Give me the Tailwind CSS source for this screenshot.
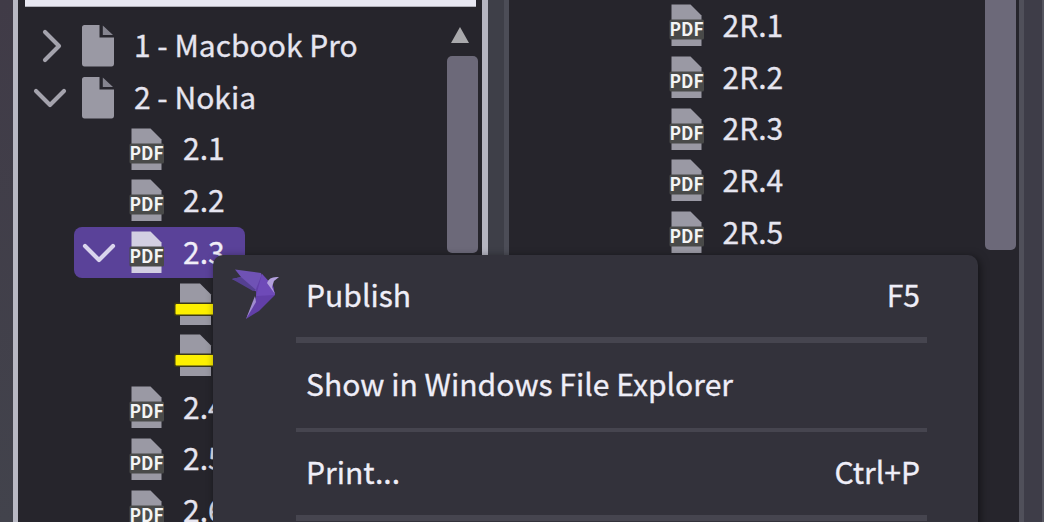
<!DOCTYPE html>
<html lang="en">
<head>
<meta charset="utf-8">
<title>Document tree</title>
<script src="https://cdn.jsdelivr.net/npm/@tailwindcss/browser@4"></script>
</head>
<body class="w-[1044px] h-[522px] overflow-hidden bg-[#26252c] font-['Noto_Sans_CJK_SC','Noto_Sans',sans-serif] text-[30px] text-[#e6e5f0] [-webkit-text-stroke:0.3px_currentColor]">
<svg class="hidden">
  <symbol id="doc" viewBox="0 0 33 43"><path d="M2.500 1H18.500V13.500H33V39.500Q33 42.500 30.500 42.500H3.500Q1 42.500 1 39.500V3.500Q1 1 3.500 1Z" fill="#9a99a4"/><path d="M21.800 1.500L32 11H21.800Z" fill="#85848f"/></symbol>
  <symbol id="pdf" viewBox="0 0 36 43"><path d="M2.500 0.500H21.500L32.500 11.500V42H2.500Z" fill="currentColor"/><rect x="0.500" y="15.500" width="34.500" height="20" rx="1.500" fill="#494a49"/><text class="[-webkit-text-stroke:0.4px_#f4f4f4]" x="0.500" y="32.300" textLength="34" lengthAdjust="spacingAndGlyphs" font-family="Noto Sans CJK SC, sans-serif" font-weight="700" font-size="18" fill="#f4f4f4">PDF</text></symbol>
  <symbol id="mark" viewBox="0 0 48 43"><path d="M6 0.500H26L37 11.500V42H6Z" fill="#9a99a4"/><rect x="0" y="19.500" width="48" height="13.500" rx="2" fill="#3b3916"/><rect x="1.500" y="21" width="46" height="10.500" rx="1" fill="#fdf000"/></symbol>
</svg>
<div class="relative flex h-[522px]">
  <div class="w-[13px] shrink-0 bg-linear-to-b from-[#403b47] to-[#42434c]"></div>
  <div class="w-[5px] shrink-0 bg-[#b8b8c3]"></div>
  <section class="flex w-[464px] shrink-0 flex-col">
    <div class="ml-[7px] h-[7px] w-[451px] shrink-0 border-b border-[#b0b0b8] bg-[#e8e8f2]"></div>
    <div class="flex pt-[13px]">
      <ul class="w-[429px] shrink-0">
        <li class="flex h-[51.700px] items-center pl-[24px]"><svg class="mr-[19px] h-[34px] w-[20px]" viewBox="0 0 20 34" fill="none" stroke="#a4a3ad" stroke-width="4.200" stroke-linecap="round" stroke-linejoin="round"><path d="M3 3L17 17L3 31"/></svg><svg class="h-[43px] w-[33px]"><use href="#doc"/></svg><span class="ml-[20px] whitespace-nowrap pb-[3px]">1 - Macbook Pro</span></li>
        <li class="flex h-[51.700px] items-center pl-[15px]"><svg class="mr-[14px] h-[20px] w-[34px]" viewBox="0 0 34 20" fill="none" stroke="#a4a3ad" stroke-width="4.200" stroke-linecap="round" stroke-linejoin="round"><path d="M3 3L17 17L31 3"/></svg><svg class="h-[43px] w-[33px]"><use href="#doc"/></svg><span class="ml-[20px] whitespace-nowrap pb-[3px]">2 - Nokia</span></li>
        <li class="flex h-[51.700px] items-center pl-[111px] text-[#9a99a4]"><svg class="h-[43px] w-[36px]"><use href="#pdf"/></svg><span class="ml-[18px] pb-[3px] text-[#e6e5f0]">2.1</span></li>
        <li class="flex h-[51.700px] items-center pl-[111px] text-[#9a99a4]"><svg class="h-[43px] w-[36px]"><use href="#pdf"/></svg><span class="ml-[18px] pb-[3px] text-[#e6e5f0]">2.2</span></li>
        <li class="ml-[56px] flex h-[51.700px] w-[171px] items-center rounded-[8px] bg-[#5a4299] pl-[8px] text-[#d2cfe2]"><svg class="mr-[13px] h-[20px] w-[34px]" viewBox="0 0 34 20" fill="none" stroke="#dad5ed" stroke-width="4.200" stroke-linecap="round" stroke-linejoin="round"><path d="M3 3L17 17L31 3"/></svg><svg class="h-[43px] w-[36px]"><use href="#pdf"/></svg><span class="ml-[18px] pb-[3px] text-[#f0eef8]">2.3</span></li>
        <li class="flex h-[51.700px] items-center pl-[156px]"><svg class="h-[43px] w-[48px]"><use href="#mark"/></svg></li>
        <li class="flex h-[51.700px] items-center pl-[156px]"><svg class="h-[43px] w-[48px]"><use href="#mark"/></svg></li>
        <li class="flex h-[51.700px] items-center pl-[111px] text-[#9a99a4]"><svg class="h-[43px] w-[36px]"><use href="#pdf"/></svg><span class="ml-[18px] pb-[3px] text-[#e6e5f0]">2.4</span></li>
        <li class="flex h-[51.700px] items-center pl-[111px] text-[#9a99a4]"><svg class="h-[43px] w-[36px]"><use href="#pdf"/></svg><span class="ml-[18px] pb-[3px] text-[#e6e5f0]">2.5</span></li>
        <li class="flex h-[51.700px] items-center pl-[111px] text-[#9a99a4]"><svg class="h-[43px] w-[36px]"><use href="#pdf"/></svg><span class="ml-[18px] pb-[3px] text-[#e6e5f0]">2.6</span></li>
      </ul>
      <div class="flex w-[31px] flex-col items-center pt-[7px]">
        <svg class="mr-[5px] h-[16px] w-[18px]" viewBox="0 0 18 16"><path d="M9 0L18 16H0Z" fill="#a9a9ac"/></svg>
        <div class="mt-[13px] h-[197px] w-[31px] rounded-[5px] bg-[#6c6979]"></div>
      </div>
    </div>
  </section>
  <div class="w-[6px] shrink-0 bg-[#b5b5c1]"></div>
  <div class="w-[16px] shrink-0 bg-[#3e3f48]"></div>
  <div class="w-[5px] shrink-0 bg-[#4c4d57]"></div>
  <section class="flex w-[510px] shrink-0 justify-between">
    <ul class="pl-[160px] text-[#9a99a4]">
      <li class="flex h-[51.700px] items-center"><svg class="h-[43px] w-[36px]"><use href="#pdf"/></svg><span class="ml-[17.500px] pb-[3px] text-[#e6e5f0]">2R.1</span></li>
      <li class="flex h-[51.700px] items-center"><svg class="h-[43px] w-[36px]"><use href="#pdf"/></svg><span class="ml-[17.500px] pb-[3px] text-[#e6e5f0]">2R.2</span></li>
      <li class="flex h-[51.700px] items-center"><svg class="h-[43px] w-[36px]"><use href="#pdf"/></svg><span class="ml-[17.500px] pb-[3px] text-[#e6e5f0]">2R.3</span></li>
      <li class="flex h-[51.700px] items-center"><svg class="h-[43px] w-[36px]"><use href="#pdf"/></svg><span class="ml-[17.500px] pb-[3px] text-[#e6e5f0]">2R.4</span></li>
      <li class="flex h-[51.700px] items-center"><svg class="h-[43px] w-[36px]"><use href="#pdf"/></svg><span class="ml-[17.500px] pb-[3px] text-[#e6e5f0]">2R.5</span></li>
    </ul>
    <div class="mr-[3px] h-[250px] w-[31px] rounded-b-[5px] bg-[#6c6979]"></div>
  </section>
  <div class="w-[5px] shrink-0 bg-[#50505a]"></div>
  <div class="w-[18px] shrink-0 bg-[#3e3d48]"></div>
  <div class="w-[2px] shrink-0 bg-[#55555f]"></div>

  <div class="absolute left-[213px] top-[255px] flex h-[290px] w-[765px] flex-col rounded-[10px] bg-[#33323b] text-[30.100px] text-[#efeef8] shadow-[2px_2px_8px_rgba(0,0,0,0.5)]">
    <div class="flex h-[82px] items-center pl-[18px] pr-[58px]">
      <svg class="mb-[4px] h-[52px] w-[50px] shrink-0" viewBox="0 0 50 52"><path d="M4 1.500L30 5L33 13L26 24L10 15L1 11L10 9Z" fill="#6f52b5"/><path d="M1 11L10 9L25 22L22 23Z" fill="#554091"/><path d="M31 6L42 18L44 27L28 43L15 51L25 29L25 21Z" fill="#623fa8"/><path d="M31 6L42 18L44 27L25 28Z" fill="#6e4ab8"/><path d="M24 28L25 34L15 51Z" fill="#a08cd0"/><path d="M36 15Q38 8 48 9L43 13L41 19L44 26Z" fill="#b3a0dd"/></svg>
      <span class="ml-[25px] pb-[3px]">Publish</span><span class="ml-auto pb-[3px]">F5</span>
    </div>
    <div class="ml-[83px] h-[6px] w-[631px] shrink-0 bg-[#46454f]"></div>
    <div class="flex h-[85px] items-center pl-[93px]"><span class="pb-[4px]">Show in Windows File Explorer</span></div>
    <div class="ml-[83px] h-[4px] w-[631px] shrink-0 bg-[#46454f]"></div>
    <div class="flex h-[83px] items-center pl-[93px] pr-[58px]"><span class="pb-[4px]">Print...</span><span class="ml-auto pb-[4px]">Ctrl+P</span></div>
    <div class="ml-[83px] h-[6px] w-[631px] shrink-0 bg-[#46454f]"></div>
  </div>
</div>
</body>
</html>
